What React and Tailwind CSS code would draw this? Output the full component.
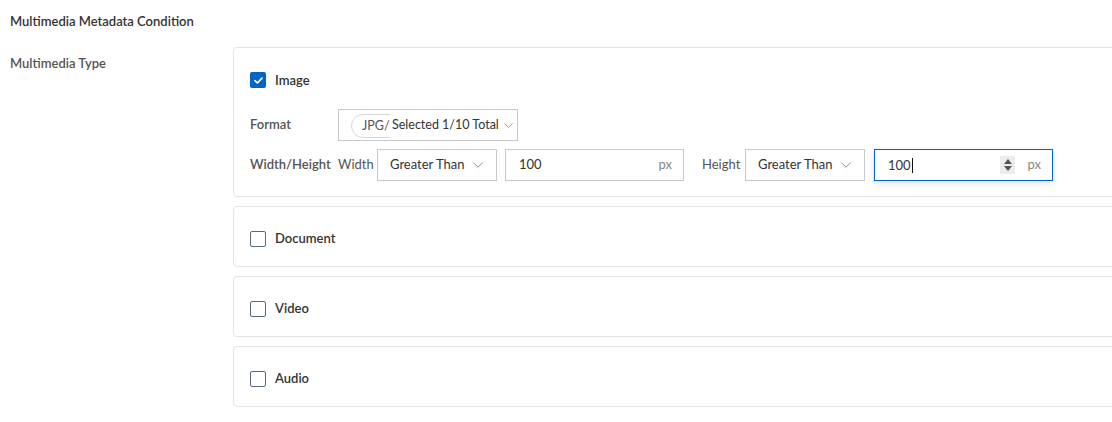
import { ChevronDown } from 'lucide-react'

const font = { fontFamily: 'Lato, "Noto Sans", Arial, sans-serif' }

function Checkbox({ checked }) {
  if (checked) {
    return (
      <span className="flex h-4 w-4 items-center justify-center rounded-[2px] bg-[#0064c8]">
        <svg width="11" height="11" viewBox="0 0 12 12" fill="none">
          <path d="M2.2 6.2 4.8 8.7 9.8 3.4" stroke="white" strokeWidth="1.8" strokeLinecap="round" strokeLinejoin="round" />
        </svg>
      </span>
    )
  }
  return <span className="h-4 w-4 rounded-[2px] border border-[#5a6b80] bg-white" />
}

function Select({ value, className = '' }) {
  return (
    <div className={`flex h-8 items-center justify-between border border-[#c9c9c9] bg-white pl-3 pr-[9px] ${className}`}>
      <span className="text-[13px] text-[#333]">{value}</span>
      <ChevronDown size={18} strokeWidth={1.1} className="shrink-0 text-[#777]" />
    </div>
  )
}

function NumInput({ focused }) {
  return (
    <div
      className={`flex h-8 w-[179px] items-center border bg-white pl-[13px] pr-[11px] ${
        focused ? 'border-[#0064c8] shadow-[0_2px_6px_rgba(0,0,0,0.15)]' : 'border-[#c9c9c9]'
      }`}
    >
      <span className="flex-1 text-[13px] text-[#333]">
        100{focused && <span className="ml-px inline-block h-[15px] w-px translate-y-[3px] bg-[#111]" />}
      </span>
      {focused && (
        <span className="mr-[12px] flex h-[18px] w-[15px] flex-col items-center justify-center gap-[2px] bg-[#ececec]">
          <svg width="8" height="5" viewBox="0 0 8 5"><path d="M4 0 8 5H0z" fill="#555" /></svg>
          <svg width="8" height="5" viewBox="0 0 8 5"><path d="M0 0h8L4 5z" fill="#555" /></svg>
        </span>
      )}
      <span className="text-[13px] text-[#888]">px</span>
    </div>
  )
}

function TypeCard({ label }) {
  return (
    <div className="flex h-[61px] items-center rounded-[4px] border border-[#e3e3e3] bg-white pl-[16px] pt-[4px]">
      <Checkbox />
      <span className="ml-[9px] text-[13px] font-semibold text-[#333]">{label}</span>
    </div>
  )
}

export default function App() {
  return (
    <div className="h-[422px] w-[1112px] overflow-hidden bg-white" style={font}>
      <div className="pl-[10px] pt-[12px] text-[13px] font-semibold text-[#333]">Multimedia Metadata Condition</div>

      <div className="mt-[15px] flex">
        <div className="w-[233px] shrink-0 pl-[10px] pt-[7px] text-[13px] font-semibold text-[#555]">Multimedia Type</div>

        <div className="flex w-[900px] shrink-0 flex-col gap-[9px]">
          {/* Image */}
          <div className="rounded-[4px] border border-[#e3e3e3] bg-white pb-[15px] pl-[16px] pt-[23px]">
            <div className="flex items-center">
              <Checkbox checked />
              <span className="ml-[9px] text-[13px] font-semibold text-[#333]">Image</span>
            </div>

            <div className="mt-[19px] flex items-center">
              <span className="w-[88px] text-[13px] font-semibold text-[#555]">Format</span>
              <div className="flex h-8 w-[180px] items-center border border-[#c9c9c9] bg-white pl-[12px] pr-[5px]">
                <div className="w-[39px] shrink-0 overflow-hidden">
                  <span className="inline-flex h-[24px] w-[60px] items-center rounded-full border border-[#d6d6d6] pl-[10px] text-[12.5px] text-[#555]">
                    JPG/
                  </span>
                </div>
                <span className="ml-[2px] whitespace-nowrap text-[12.5px] text-[#333]">Selected 1/10 Total</span>
                <ChevronDown size={15} strokeWidth={1.2} className="ml-[2px] shrink-0 text-[#777]" />
              </div>
            </div>

            <div className="mt-[8px] flex items-center">
              <span className="w-[88px] text-[13px] font-semibold text-[#555]">Width/Height</span>
              <span className="w-[39px] text-[13px] text-[#555]">Width</span>
              <Select value="Greater Than" className="w-[120px]" />
              <div className="ml-[8px]">
                <NumInput />
              </div>
              <span className="ml-[18px] w-[43px] text-[13px] text-[#555]">Height</span>
              <Select value="Greater Than" className="w-[120px]" />
              <div className="ml-[9px]">
                <NumInput focused />
              </div>
            </div>
          </div>

          <TypeCard label="Document" />
          <TypeCard label="Video" />
          <TypeCard label="Audio" />
        </div>
      </div>
    </div>
  )
}
